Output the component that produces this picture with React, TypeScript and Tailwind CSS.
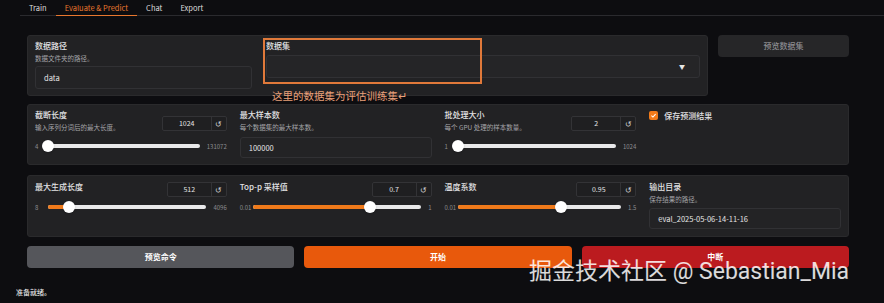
import React from "react";

const font = "font-['Noto_Sans_CJK_SC','Noto_Sans',sans-serif]";

function NumberBox({ value, w = "w-[65px]" }: { value: string; w?: string }) {
    return (
        <div className={`${w} h-[15px] flex border border-[#333336] rounded-[2px] bg-[#1f1f21]`}>
            <div className="flex-1 flex items-center justify-center text-[7px] text-[#e6e6e6]">{value}</div>
            <div className="w-[15px] border-l border-[#333336] flex items-center justify-center text-[8px] text-[#cfcfcf]">↺</div>
        </div>
    );
}

function Slider({ min, max, pct, fill }: { min: string; max: string; pct: number; fill?: boolean }) {
    return (
        <div className="flex items-center h-[12px] text-[6px] text-[#8d8d90]">
            <span className="w-[10px] shrink-0">{min}</span>
            <div className="flex-1 relative h-[4px] rounded-full bg-[#e9e9ea] ml-[3px] mr-[7px]">
                {fill && <div className="absolute left-0 top-0 h-full rounded-full bg-[#f07a1a]" style={{ width: `${pct}%` }} />}
                <div
                    className="absolute top-1/2 w-[12px] h-[12px] rounded-full bg-white -translate-x-1/2 -translate-y-1/2 shadow"
                    style={{ left: `${pct}%` }}
                />
            </div>
            <span className="shrink-0">{max}</span>
        </div>
    );
}

function Label({ children }: { children: React.ReactNode }) {
    return <div className="text-[8px] leading-[10px] font-medium text-[#e2e2e4]">{children}</div>;
}

function Desc({ children }: { children: React.ReactNode }) {
    return <div className="text-[6.5px] leading-[9px] text-[#a4a4a8] mt-[3px]">{children}</div>;
}

function TextBox({ value, h = "h-[21px]" }: { value: string; h?: string }) {
    return (
        <div className={`${h} flex items-center px-[8px] border border-[#313134] rounded-[3px] bg-[#232325] text-[7.5px] text-[#e6e6e6]`}>
            {value}
        </div>
    );
}

export default function App() {
    return (
        <div className={`relative w-[884px] h-[303px] overflow-hidden bg-[#0d0d10] ${font}`}>
            {/* tabs */}
            <div className="ml-[20px] flex h-[16px] border-b border-[#2a2a2e] text-[7.5px]">
                <div className="px-[9px] flex items-center text-[#dcdcdc]">Train</div>
                <div className="px-[9px] flex items-center text-[#e8772e] border-b border-[#e8772e] -mb-px">Evaluate &amp; Predict</div>
                <div className="px-[9px] flex items-center text-[#dcdcdc]">Chat</div>
                <div className="px-[9px] flex items-center text-[#dcdcdc]">Export</div>
            </div>

            <div className="ml-[27px] w-[822px] mt-[19px]">
                {/* row 1 */}
                <div className="flex gap-[10px] items-start">
                    <div className="w-[681px] h-[61px] rounded-[3px] bg-[#222224] border border-[#2a2a2c] px-[7px] pt-[5px] grid grid-cols-[217px_1fr] gap-[14px]">
                        <div>
                            <Label>数据路径</Label>
                            <Desc>数据文件夹的路径。</Desc>
                            <div className="mt-[3px]">
                                <TextBox value="data" h="h-[23px]" />
                            </div>
                        </div>
                        <div>
                            <Label>数据集</Label>
                            <div className="mt-[4px] h-[23px] flex items-center justify-end pr-[14px] border border-[#313134] rounded-[3px] bg-[#252527]">
                                <span className="text-[6px] text-[#e6e6e6]">▼</span>
                            </div>
                        </div>
                    </div>
                    <div className="w-[131px] h-[22px] rounded-[4px] bg-[#262628] flex items-center justify-center text-[8px] font-medium text-[#8c8c90]">
                        预览数据集
                    </div>
                </div>

                {/* row 2 */}
                <div className="mt-[8px] h-[61px] rounded-[3px] bg-[#222224] border border-[#2a2a2c] px-[7px] pt-[5px] grid grid-cols-4 gap-[13px]">
                    <div>
                        <div className="flex justify-between">
                            <div>
                                <Label>截断长度</Label>
                                <Desc>输入序列分词后的最大长度。</Desc>
                            </div>
                            <div className="mt-[6px]">
                                <NumberBox value="1024" />
                            </div>
                        </div>
                        <div className="mt-[8px]">
                            <Slider min="4" max="131072" pct={0} />
                        </div>
                    </div>
                    <div>
                        <Label>最大样本数</Label>
                        <Desc>每个数据集的最大样本数。</Desc>
                        <div className="mt-[5px]">
                            <TextBox value="100000" />
                        </div>
                    </div>
                    <div>
                        <div className="flex justify-between">
                            <div>
                                <Label>批处理大小</Label>
                                <Desc>每个 GPU 处理的样本数量。</Desc>
                            </div>
                            <div className="mt-[6px]">
                                <NumberBox value="2" />
                            </div>
                        </div>
                        <div className="mt-[8px]">
                            <Slider min="1" max="1024" pct={0} />
                        </div>
                    </div>
                    <div className="flex items-start gap-[6px] pt-[1px]">
                        <div className="w-[9px] h-[9px] rounded-[2px] bg-[#f07a1a] flex items-center justify-center">
                            <svg viewBox="0 0 10 10" className="w-[7px] h-[7px]">
                                <path d="M2 5.2 L4.2 7.2 L8 3" fill="none" stroke="white" strokeWidth="1.5" />
                            </svg>
                        </div>
                        <Label>保存预测结果</Label>
                    </div>
                </div>

                {/* row 3 */}
                <div className="mt-[10px] h-[62px] rounded-[3px] bg-[#222224] border border-[#2a2a2c] px-[7px] pt-[6px] grid grid-cols-4 gap-[13px]">
                    <div>
                        <div className="flex justify-between items-start">
                            <Label>最大生成长度</Label>
                            <NumberBox value="512" w="w-[60px]" />
                        </div>
                        <div className="mt-[4px]">
                            <Slider min="8" max="4096" pct={13} fill />
                        </div>
                    </div>
                    <div>
                        <div className="flex justify-between items-start">
                            <Label>Top-p 采样值</Label>
                            <NumberBox value="0.7" w="w-[60px]" />
                        </div>
                        <div className="mt-[4px]">
                            <Slider min="0.01" max="1" pct={69.7} fill />
                        </div>
                    </div>
                    <div>
                        <div className="flex justify-between items-start">
                            <Label>温度系数</Label>
                            <NumberBox value="0.95" w="w-[60px]" />
                        </div>
                        <div className="mt-[4px]">
                            <Slider min="0.01" max="1.5" pct={63.1} fill />
                        </div>
                    </div>
                    <div>
                        <Label>输出目录</Label>
                        <Desc>保存结果的路径。</Desc>
                        <div className="mt-[4px]">
                            <TextBox value="eval_2025-05-06-14-11-16" />
                        </div>
                    </div>
                </div>

                {/* buttons */}
                <div className="mt-[9px] flex gap-[10px] text-[8px] font-bold text-white">
                    <div className="flex-1 h-[22px] rounded-[4px] bg-[#55565b] flex items-center justify-center">预览命令</div>
                    <div className="flex-1 h-[22px] rounded-[4px] bg-[#e8590c] flex items-center justify-center">开始</div>
                    <div className="flex-1 h-[22px] rounded-[4px] bg-[#bb1b1f] flex items-center justify-center">中断</div>
                </div>
            </div>

            <div className="ml-[16px] mt-[19px] text-[7px] font-medium text-[#e6e6e6]">准备就绪。</div>

            {/* annotation overlay */}
            <div className="absolute left-[263px] top-[38px] w-[219px] h-[46px] border-2 border-[#e0793a]" />
            <div className="absolute left-[272px] top-[89px] text-[10.5px] leading-[14px] text-[#eaa07a]">这里的数据集为评估训练集↵</div>

            {/* watermark */}
            <div className="absolute left-[529px] top-[257px] text-[23px] leading-[30px] text-white/85 font-['Roboto','Noto_Sans_CJK_SC',sans-serif] whitespace-nowrap">
                掘金技术社区 @ Sebastian_Mia
            </div>
        </div>
    );
}
